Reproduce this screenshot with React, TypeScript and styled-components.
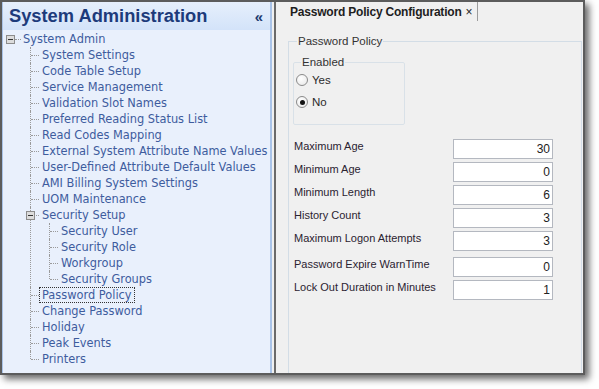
import React from "react";
import styled, { createGlobalStyle } from "styled-components";

const Global = createGlobalStyle`
  html, body {
    margin: 0;
    padding: 0;
    background: #ffffff;
  }
  * {
    box-sizing: border-box;
  }
`;

const Page = styled.div`
  width: 599px;
  height: 389px;
  padding: 0;
`;

const Window = styled.div`
  display: flex;
  width: 585px;
  height: 375px;
  border: 2px solid #5c5c5c;
  background: #f0f0f0;
  box-shadow: 4px 4px 7px rgba(0, 0, 0, 0.6);
  overflow: hidden;
`;

const LeftPanel = styled.div`
  display: flex;
  flex-direction: column;
  width: 270px;
  flex-shrink: 0;
  background: #e9f0fc;
  border-left: 1px solid #a9c3e8;
  border-right: 2px solid #a9c3e8;
`;

const PanelHeader = styled.div`
  display: flex;
  align-items: center;
  justify-content: space-between;
  height: 28px;
  padding: 0 8px 0 6px;
  background: linear-gradient(#e6effc, #d3e3f9);
  color: #1d3b7b;
  font-family: "Liberation Sans", Arial, sans-serif;
  font-weight: bold;
  font-size: 18.3px;
`;

const Collapse = styled.span`
  font-size: 15px;
  font-weight: bold;
  color: #203a6e;
  letter-spacing: -1px;
`;

const Tree = styled.ul`
  margin: 0;
  padding: 1px 0 0 0;
  list-style: none;
  font-family: "DejaVu Sans", Verdana, sans-serif;
  font-size: 11.4px;
  color: #3e5c9e;
`;

const RootItem = styled.li`
  position: relative;
  padding-left: 20px;
  line-height: 16px;
`;

const Branch = styled.ul`
  margin: 0 0 0 7px;
  padding: 0;
  list-style: none;
`;

const Item = styled.li<{ $last?: boolean }>`
  position: relative;
  padding-left: 12px;
  line-height: 16px;
  white-space: nowrap;

  &::before {
    content: "";
    position: absolute;
    left: 0;
    top: 0;
    height: ${({ $last }) => ($last ? "8px" : "100%")};
    border-left: 1px dotted #9a9a9a;
  }

  &::after {
    content: "";
    position: absolute;
    left: 1px;
    top: 8px;
    width: 8px;
    border-top: 1px dotted #9a9a9a;
  }
`;

const Toggle = styled.span<{ $root?: boolean }>`
  position: absolute;
  z-index: 1;
  left: ${({ $root }) => ($root ? "3px" : "-4px")};
  top: 4px;
  width: 9px;
  height: 9px;
  border: 1px solid #8c8c8c;
  background: #dcdcdc;

  &::after {
    content: "";
    position: absolute;
    left: 1px;
    top: 3px;
    width: 5px;
    height: 1px;
    background: #333;
  }
`;

const RootDash = styled.span`
  position: absolute;
  left: 12px;
  top: 8px;
  width: 6px;
  border-top: 1px dotted #9a9a9a;
`;

const Label = styled.span<{ $selected?: boolean }>`
  display: inline-block;
  margin-left: -3px;
  padding: 0 2px;
  line-height: 14px;
  border: 1px ${({ $selected }) => ($selected ? "dotted #333" : "solid transparent")};
`;

const RightPanel = styled.div`
  flex: 1;
  display: flex;
  flex-direction: column;
  margin-left: 2px;
  border-left: 2px solid #6a6a6a;
  background: #f0f0f0;
  font-family: "Liberation Sans", Arial, sans-serif;
  color: #222;
`;

const TabBar = styled.div`
  display: flex;
  height: 19px;
  padding-left: 12px;
`;

const Tab = styled.div`
  display: flex;
  align-items: center;
  padding: 0 5px 0 2px;
  border-right: 1px solid #9c9c9c;
  font-size: 12px;
  font-weight: bold;
  letter-spacing: -0.2px;
  color: #1e1e1e;
`;

const Close = styled.span`
  margin-left: 4px;
  font-weight: normal;
  font-size: 12px;
`;

const Content = styled.div`
  flex: 1;
  display: flex;
  padding: 13px 1px 0 12px;
`;

const Group = styled.fieldset`
  flex: 1;
  margin: 0;
  padding: 0 0 0 3px;
  border: 1px solid #d3dde6;
  border-bottom: none;
  font-size: 11.5px;
`;

const Legend = styled.legend`
  padding: 0 1px;
  margin-left: 5px;
  color: #333;
  line-height: 15px;
`;

const SubGroup = styled.fieldset`
  width: 112px;
  height: 69px;
  margin: 7px 0 0 1px;
  padding: 3px 0 0 2px;
  border: 1px solid #d9e1e8;
  border-radius: 2px;
`;

const SubLegend = styled.legend`
  padding: 0 1px;
  margin-left: 5px;
  color: #333;
  line-height: 13px;
`;

const RadioRow = styled.label`
  display: flex;
  align-items: center;
  gap: 4px;
  height: 16px;
  margin-bottom: 6px;
  color: #2a2a2a;
`;

const RadioCircle = styled.span<{ $checked?: boolean }>`
  position: relative;
  width: 12px;
  height: 12px;
  border-radius: 50%;
  border: 1px solid #8a8a8a;
  background: radial-gradient(circle at 40% 35%, #ffffff, #e6e6e6);

  &::after {
    content: "";
    display: ${({ $checked }) => ($checked ? "block" : "none")};
    position: absolute;
    left: 2.5px;
    top: 2.5px;
    width: 5px;
    height: 5px;
    border-radius: 50%;
    background: #111;
  }
`;

const Form = styled.div`
  display: flex;
  flex-direction: column;
  gap: 3px;
  margin-top: 14px;
  padding-left: 2px;
  font-size: 11px;
`;

const FieldRow = styled.div<{ $spaced?: boolean }>`
  display: flex;
  align-items: flex-start;
  margin-top: ${({ $spaced }) => ($spaced ? "3px" : "0")};
`;

const FieldLabel = styled.span`
  width: 159px;
  line-height: 14px;
  color: #2b2330;
`;

const NumberBox = styled.div`
  width: 100px;
  height: 20px;
  padding: 0 2px;
  border: 1px solid #b4b8c0;
  background: #fff;
  text-align: right;
  line-height: 18px;
  font-size: 12px;
  color: #222;
`;

const level1 = [
  "System Settings",
  "Code Table Setup",
  "Service Management",
  "Validation Slot Names",
  "Preferred Reading Status List",
  "Read Codes Mapping",
  "External System Attribute Name Values",
  "User-Defined Attribute Default Values",
  "AMI Billing System Settings",
  "UOM Maintenance",
];

const security = ["Security User", "Security Role", "Workgroup", "Security Groups"];

const after = ["Password Policy", "Change Password", "Holiday", "Peak Events", "Printers"];

const fields = [
  { label: "Maximum Age", value: "30" },
  { label: "Minimum Age", value: "0" },
  { label: "Minimum Length", value: "6" },
  { label: "History Count", value: "3" },
  { label: "Maximum Logon Attempts", value: "3" },
  { label: "Password Expire WarnTime", value: "0", spaced: true },
  { label: "Lock Out Duration in Minutes", value: "1" },
];

export default function App() {
  return (
    <Page>
      <Global />
      <Window>
        <LeftPanel>
          <PanelHeader>
            <span>System Administration</span>
            <Collapse>«</Collapse>
          </PanelHeader>
          <Tree>
            <RootItem>
              <Toggle $root />
              <RootDash />
              <Label>System Admin</Label>
              <Branch>
                {level1.map((name) => (
                  <Item key={name}>
                    <Label>{name}</Label>
                  </Item>
                ))}
                <Item>
                  <Toggle />
                  <Label>Security Setup</Label>
                  <Branch>
                    {security.map((name, i) => (
                      <Item key={name} $last={i === security.length - 1}>
                        <Label>{name}</Label>
                      </Item>
                    ))}
                  </Branch>
                </Item>
                {after.map((name, i) => (
                  <Item key={name} $last={i === after.length - 1}>
                    <Label $selected={name === "Password Policy"}>{name}</Label>
                  </Item>
                ))}
              </Branch>
            </RootItem>
          </Tree>
        </LeftPanel>
        <RightPanel>
          <TabBar>
            <Tab>
              Password Policy Configuration<Close>×</Close>
            </Tab>
          </TabBar>
          <Content>
            <Group>
              <Legend>Password Policy</Legend>
              <SubGroup>
                <SubLegend>Enabled</SubLegend>
                <RadioRow>
                  <RadioCircle />
                  Yes
                </RadioRow>
                <RadioRow>
                  <RadioCircle $checked />
                  No
                </RadioRow>
              </SubGroup>
              <Form>
                {fields.map((f) => (
                  <FieldRow key={f.label} $spaced={f.spaced}>
                    <FieldLabel>{f.label}</FieldLabel>
                    <NumberBox>{f.value}</NumberBox>
                  </FieldRow>
                ))}
              </Form>
            </Group>
          </Content>
        </RightPanel>
      </Window>
    </Page>
  );
}
